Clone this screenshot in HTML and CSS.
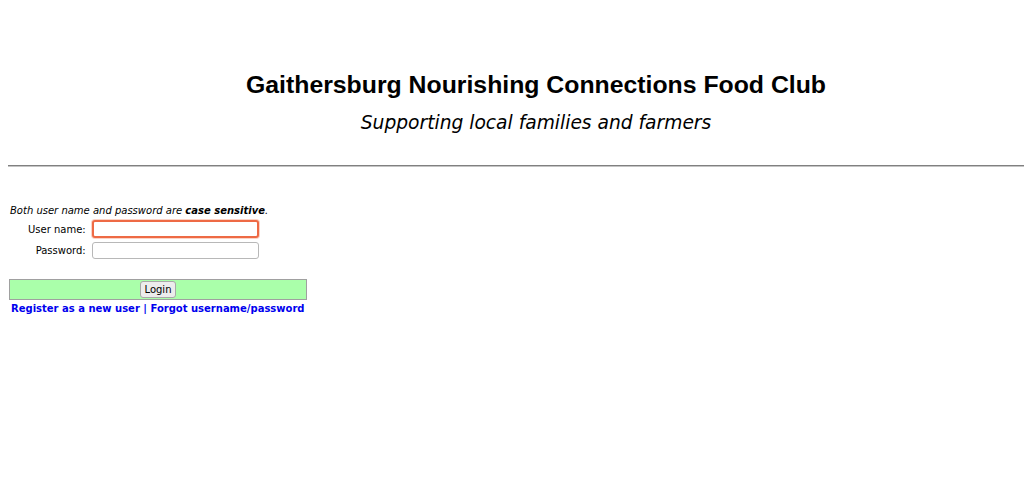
FILE: index.html
```html
<!DOCTYPE html>
<html>
<head>
<meta charset="utf-8">
<link rel="stylesheet" href="styles.css">
</head>
<body>
<div class="page">
  <header class="masthead">
    <h1 class="title">Gaithersburg Nourishing Connections Food Club</h1>
    <p class="tagline">Supporting local families and farmers</p>
  </header>
  <div class="rule"></div>
  <form class="login">
    <p class="note">Both user name and password are <b>case sensitive</b>.</p>
    <table class="fields">
      <tr>
        <td class="label">User name:</td>
        <td><input class="field focused" type="text"></td>
      </tr>
      <tr>
        <td class="label">Password:</td>
        <td><input class="field" type="password"></td>
      </tr>
    </table>
    <div class="submit-bar"><button class="btn" type="button">Login</button></div>
    <div class="links"><a href="#">Register as a new user</a> | <a href="#">Forgot username/password</a></div>
  </form>
</div>
</body>
</html>
```
FILE: styles.css
```css
html { overflow: hidden; }
body {
  margin: 8px 0 8px 8px;
  font-family: "DejaVu Sans", sans-serif;
  font-size: 10px;
  color: #000;
  background: #fff;
}
.masthead { text-align: center; padding: 63px 0 0 40px; }
.title {
  font-family: "Liberation Sans", Arial, sans-serif;
  font-size: 24.8px;
  font-weight: bold;
  margin: 0;
  line-height: 28px;
}
.tagline {
  font-family: "DejaVu Sans", sans-serif;
  font-style: italic;
  font-size: 18.67px;
  margin: 12px 0 0;
  line-height: 24px;
}
.rule {
  margin: 30px 0 0;
  border-top: 1px solid #808080;
  border-bottom: 1px solid #c4c4c4;
  height: 0;
}
.login { margin-top: 38px; }
.note { font-style: italic; margin: 0 0 0 2px; line-height: 12px; }
.fields { border-spacing: 2px; margin-left: 0; }
.label { text-align: right; padding: 1px 3px 1px 18px; }
.field {
  width: 167px;
  height: 17px;
  box-sizing: border-box;
  border: 1px solid #b8b8b8;
  border-radius: 3px;
  padding: 1px 2px;
  margin: 0;
  font: 10px "DejaVu Sans", sans-serif;
  display: block;
}
.field.focused { border: 2px solid #ee6a45; box-shadow: 0 0 0 1px #fbd3c6; height: 18px; }
.submit-bar {
  margin: 17px 0 0 1px;
  width: 298px;
  box-sizing: border-box;
  background: #aaffaa;
  border: 1px solid #a0a0a0;
  text-align: center;
  padding: 1px 0 1px;
  height: 21px;
}
.btn {
  font: 10px "DejaVu Sans", sans-serif;
  height: 17px;
  padding: 0 4px;
  border: 1px solid #a8a8a8;
  border-radius: 3px;
  background: #ececec;
  color: #000;
}
.links { margin: 3px 0 0 3px; font-weight: bold; color: #0000ee; }
.links a { color: #0000ee; text-decoration: none; }
```
